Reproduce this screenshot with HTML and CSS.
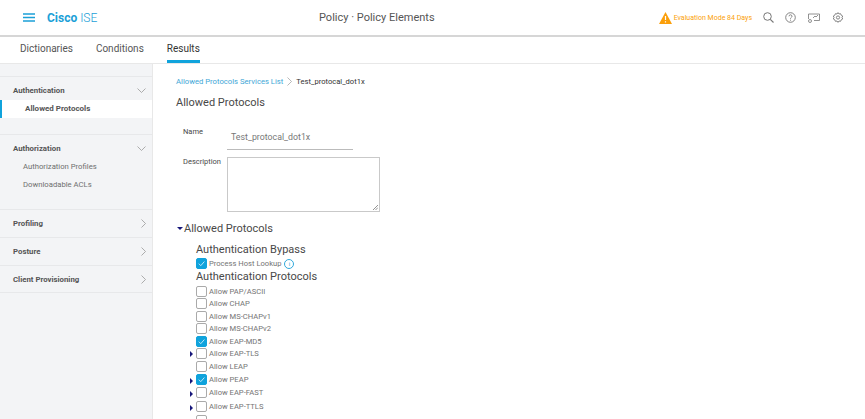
FILE: index.html
```html
<!DOCTYPE html>
<html lang="en">
<head>
<meta charset="utf-8">
<title>Policy Elements</title>
<link rel="stylesheet" href="styles.css">
</head>
<body>
<header class="topbar">
  <div class="brand">
    <svg class="burger" width="12" height="9" viewBox="0 0 12 9"><path d="M0 1h12M0 4.5h12M0 8h12" stroke="#1ba0d7" stroke-width="1.5"/></svg>
    <span class="logo"><b>Cisco</b> ISE</span>
  </div>
  <div class="title">Policy · Policy Elements</div>
  <div class="tools">
    <svg class="warn" width="13" height="12" viewBox="0 0 13 12"><path d="M6.5 0 13 12H0Z" fill="#fb9f0a"/><path d="M6.5 4v4M6.5 9.2v1.2" stroke="#fff" stroke-width="1.2"/></svg>
    <span class="eval">Evaluation Mode 84 Days</span>
    <svg class="ic-search" width="11" height="11" viewBox="0 0 11 11"><circle cx="4.5" cy="4.5" r="3.8" fill="none" stroke="#777" stroke-width="1"/><path d="M7.3 7.3 10.5 10.5" stroke="#777" stroke-width="1.1"/></svg>
    <svg class="ic-help" width="11" height="11" viewBox="0 0 11 11"><circle cx="5.5" cy="5.5" r="4.8" fill="none" stroke="#777" stroke-width=".9"/><path d="M4 4.3c0-2 3-2 3 0 0 1.1-1.5 1.1-1.5 2.4M5.5 7.7v1" fill="none" stroke="#777" stroke-width=".9"/></svg>
    <svg class="ic-dash" width="12" height="10" viewBox="0 0 12 10"><path d="M3 1h8.5v6.5H6M.5 6V1H3" fill="none" stroke="#777" stroke-width=".8"/><circle cx="2" cy="8" r="1.5" fill="none" stroke="#777" stroke-width=".8"/><path d="M5 5l2-2 1 1 2-2" fill="none" stroke="#777" stroke-width=".8"/></svg>
    <svg class="ic-gear" width="10" height="11" viewBox="0 0 10 11"><path d="M5 .6 6 2l1.6-.3L8.3 3.3 9.7 4 9 5.5l.7 1.5-1.4.7-.7 1.6L6 9l-1 1.4L4 9l-1.6.3-.7-1.6L.3 7 1 5.5.3 4l1.4-.7.7-1.6L4 2Z" fill="none" stroke="#777" stroke-width=".9"/><circle cx="5" cy="5.5" r="1.6" fill="none" stroke="#777" stroke-width=".9"/></svg>
  </div>
</header>
<nav class="tabs">
  <a class="tab">Dictionaries</a>
  <a class="tab">Conditions</a>
  <a class="tab active">Results</a>
</nav>
<div class="page">
  <aside class="side">
    <section class="group g-auth">
      <div class="ghead"><span>Authentication</span><svg class="chev" width="9" height="5" viewBox="0 0 9 5"><path d="M.5.5l4 4 4-4" fill="none" stroke="#999" stroke-width=".8"/></svg></div>
      <div class="item current">Allowed Protocols</div>
    </section>
    <section class="group g-authz">
      <div class="ghead"><span>Authorization</span><svg class="chev" width="9" height="5" viewBox="0 0 9 5"><path d="M.5.5l4 4 4-4" fill="none" stroke="#999" stroke-width=".8"/></svg></div>
      <div class="item">Authorization Profiles</div>
      <div class="item">Downloadable ACLs</div>
    </section>
    <section class="group g-one">
      <div class="ghead"><span>Profiling</span><svg class="chev-r" width="5" height="9" viewBox="0 0 5 9"><path d="M.5.5l4 4-4 4" fill="none" stroke="#999" stroke-width=".8"/></svg></div>
    </section>
    <section class="group g-one">
      <div class="ghead"><span>Posture</span><svg class="chev-r" width="5" height="9" viewBox="0 0 5 9"><path d="M.5.5l4 4-4 4" fill="none" stroke="#999" stroke-width=".8"/></svg></div>
    </section>
    <section class="group g-one">
      <div class="ghead"><span>Client Provisioning</span><svg class="chev-r" width="5" height="9" viewBox="0 0 5 9"><path d="M.5.5l4 4-4 4" fill="none" stroke="#999" stroke-width=".8"/></svg></div>
    </section>
  </aside>
  <main class="main">
    <div class="crumbs"><a>Allowed Protocols Services List</a><svg class="crumb-sep" width="5" height="9" viewBox="0 0 5 9"><path d="M.5.5l4 4-4 4" fill="none" stroke="#999" stroke-width=".7"/></svg><span>Test_protocal_dot1x</span></div>
    <h1 class="h1">Allowed Protocols</h1>
    <div class="field f-name"><label>Name</label><div class="name-val">Test_protocal_dot1x</div></div>
    <div class="field f-desc"><label>Description</label>
      <div class="desc"><svg class="grip" width="5" height="5" viewBox="0 0 5 5"><path d="M0 5 5 0M2.5 5 5 2.5" stroke="#666" stroke-width=".7"/></svg></div>
    </div>
    <h2 class="h2"><i class="tri-down"></i>Allowed Protocols</h2>
    <div class="sub">
      <h3 class="h3">Authentication Bypass</h3>
      <div class="row r-host"><span class="box on"><svg viewBox="0 0 10 10"><path d="M2 5.2 4.2 7.4 8.2 2.8" fill="none" stroke="#cfeefb" stroke-width="1"/></svg></span>Process Host Lookup<span class="info">i</span></div>
      <h3 class="h3">Authentication Protocols</h3>
      <div class="row h12 first"><span class="box"></span>Allow PAP/ASCII</div>
      <div class="row h13"><span class="box"></span>Allow CHAP</div>
      <div class="row h12"><span class="box"></span>Allow MS-CHAPv1</div>
      <div class="row h13"><span class="box"></span>Allow MS-CHAPv2</div>
      <div class="row h12"><span class="box on"><svg viewBox="0 0 10 10"><path d="M2 5.2 4.2 7.4 8.2 2.8" fill="none" stroke="#cfeefb" stroke-width="1"/></svg></span>Allow EAP-MD5</div>
      <div class="row h12"><i class="tri-right"></i><span class="box"></span>Allow EAP-TLS</div>
      <div class="row h14"><span class="box"></span>Allow LEAP</div>
      <div class="row h13"><i class="tri-right"></i><span class="box on"><svg viewBox="0 0 10 10"><path d="M2 5.2 4.2 7.4 8.2 2.8" fill="none" stroke="#cfeefb" stroke-width="1"/></svg></span>Allow PEAP</div>
      <div class="row h13"><i class="tri-right"></i><span class="box"></span>Allow EAP-FAST</div>
      <div class="row h15"><i class="tri-right"></i><span class="box"></span>Allow EAP-TTLS</div>
      <div class="row h13"><span class="box"></span></div>
    </div>
  </main>
</div>
</body>
</html>
```
FILE: styles.css
```css
html, body { margin: 0; padding: 0; height: 100%; overflow: hidden; background: #fff; }
body { font-family: Roboto, "Liberation Sans", sans-serif; color: #444; width: 865px; height: 419px; }
.topbar { height: 35px; border-bottom: 2px solid #d6d6d6; display: grid; grid-template-columns: 319px auto 1fr; align-items: center; }
.brand { display: flex; align-items: center; padding-left: 23px; }
.burger { margin-right: 12px; }
.logo { font-size: 12px; color: #1ba0d7; font-weight: 300; }
.logo b { font-weight: 700; }
.title { font-size: 11px; color: #555; }
.tools { display: flex; align-items: center; justify-content: flex-end; padding-right: 22px; }
.warn { margin-right: 2px; }
.eval { font-size: 7px; color: #fb9f0a; margin-right: 11px; }
.ic-search { margin-right: 11px; }
.ic-help { margin-right: 12px; }
.ic-dash { margin-right: 13px; }
.tabs { height: 26px; border-bottom: 1px solid #e8e8e8; display: flex; padding-left: 20px; gap: 23px; }
.tab { font-size: 10px; color: #555; line-height: 24px; height: 26px; box-sizing: border-box; }
.tab.active { color: #333; border-bottom: 3px solid #10a3dc; }
.page { display: flex; height: 355px; }
.side { width: 152px; background: #f3f4f6; border-right: 1px solid #e8e8e8; padding-top: 12px; flex: none; }
.group { border-top: 1px solid #e7e8ea; box-sizing: border-box; }
.g-auth { height: 58px; }
.g-authz { height: 75px; }
.g-one { height: 28px; }
.g-one:last-child { border-bottom: 1px solid #e7e8ea; }
.ghead { height: 23px; box-sizing: border-box; padding: 3px 6px 0 13px; display: flex; align-items: center; justify-content: space-between; font-size: 7.8px; font-weight: 700; color: #555; }
.g-one .ghead { height: 27px; padding-top: 0; }
.item { height: 18px; line-height: 18px; font-size: 7.7px; color: #6f6f6f; padding-left: 23px; }
.item.current { background: #fff; font-weight: 700; font-size: 8px; color: #555; border-left: 2px solid #10a3dc; padding-left: 23px; }
.main { flex: 1; padding-left: 23px; min-width: 0; }
.crumbs { display: flex; align-items: center; font-size: 7.7px; margin-top: 12px; height: 10px; }
.crumbs a { color: #3ea6d6; }
.crumb-sep { margin: 0 4px 0 4px; }
.crumbs span { color: #333; font-size: 7.6px; }
.h1 { font-size: 11px; font-weight: 400; color: #484848; margin: 10px 0 0; line-height: 14px; }
.field { display: flex; }
.field label { width: 44px; padding-left: 7px; font-size: 7.5px; color: #484848; flex: none; }
.f-name { margin-top: 16px; height: 31px; }
.name-val { width: 122px; height: 23px; font-size: 8.8px; color: #777; padding-left: 4px; border-bottom: 1px solid #bbb; line-height: 23px; }
.f-name label { padding-top: 1px; }
.f-desc { height: 55px; }
.desc { width: 151px; height: 53px; border: 1px solid #c9c9c9; position: relative; }
.grip { position: absolute; right: 1px; bottom: 1px; }
.h2 { display: flex; align-items: center; font-size: 11px; font-weight: 400; color: #484848; margin: 9px 0 0; height: 14px; }
.tri-down { width: 0; height: 0; border-left: 3px solid transparent; border-right: 3px solid transparent; border-top: 3px solid #16167a; margin: 0 1px; }
.sub { padding-left: 20px; margin-top: 9px; }
.h3 { font-size: 11px; font-weight: 400; color: #484848; margin: 0; line-height: 12px; height: 12px; }
.row { display: flex; align-items: center; font-size: 7.6px; color: #747474; position: relative; height: 12px; }
.r-host { height: 13px; margin: 1px 0; }
.first { margin-top: 2px; }
.h12 { height: 12px; }
.h13 { height: 13px; }
.h14 { height: 14px; }
.h15 { height: 15px; }
.box { width: 9px; height: 9px; border: 1px solid #aaa; border-radius: 2px; background: #fff; margin-right: 2px; flex: none; }
.box.on { background: #10a3dc; border-color: #10a3dc; }
.box svg { display: block; width: 9px; height: 9px; }
.info { width: 8px; height: 8px; border: 1px solid #30a8dc; border-radius: 50%; color: #30a8dc; font-size: 6px; line-height: 8px; text-align: center; margin-left: 3px; }
.tri-right { position: absolute; left: -6px; top: 50%; margin-top: -2px; width: 0; height: 0; border-top: 3px solid transparent; border-bottom: 3px solid transparent; border-left: 3px solid #16167a; }
```
